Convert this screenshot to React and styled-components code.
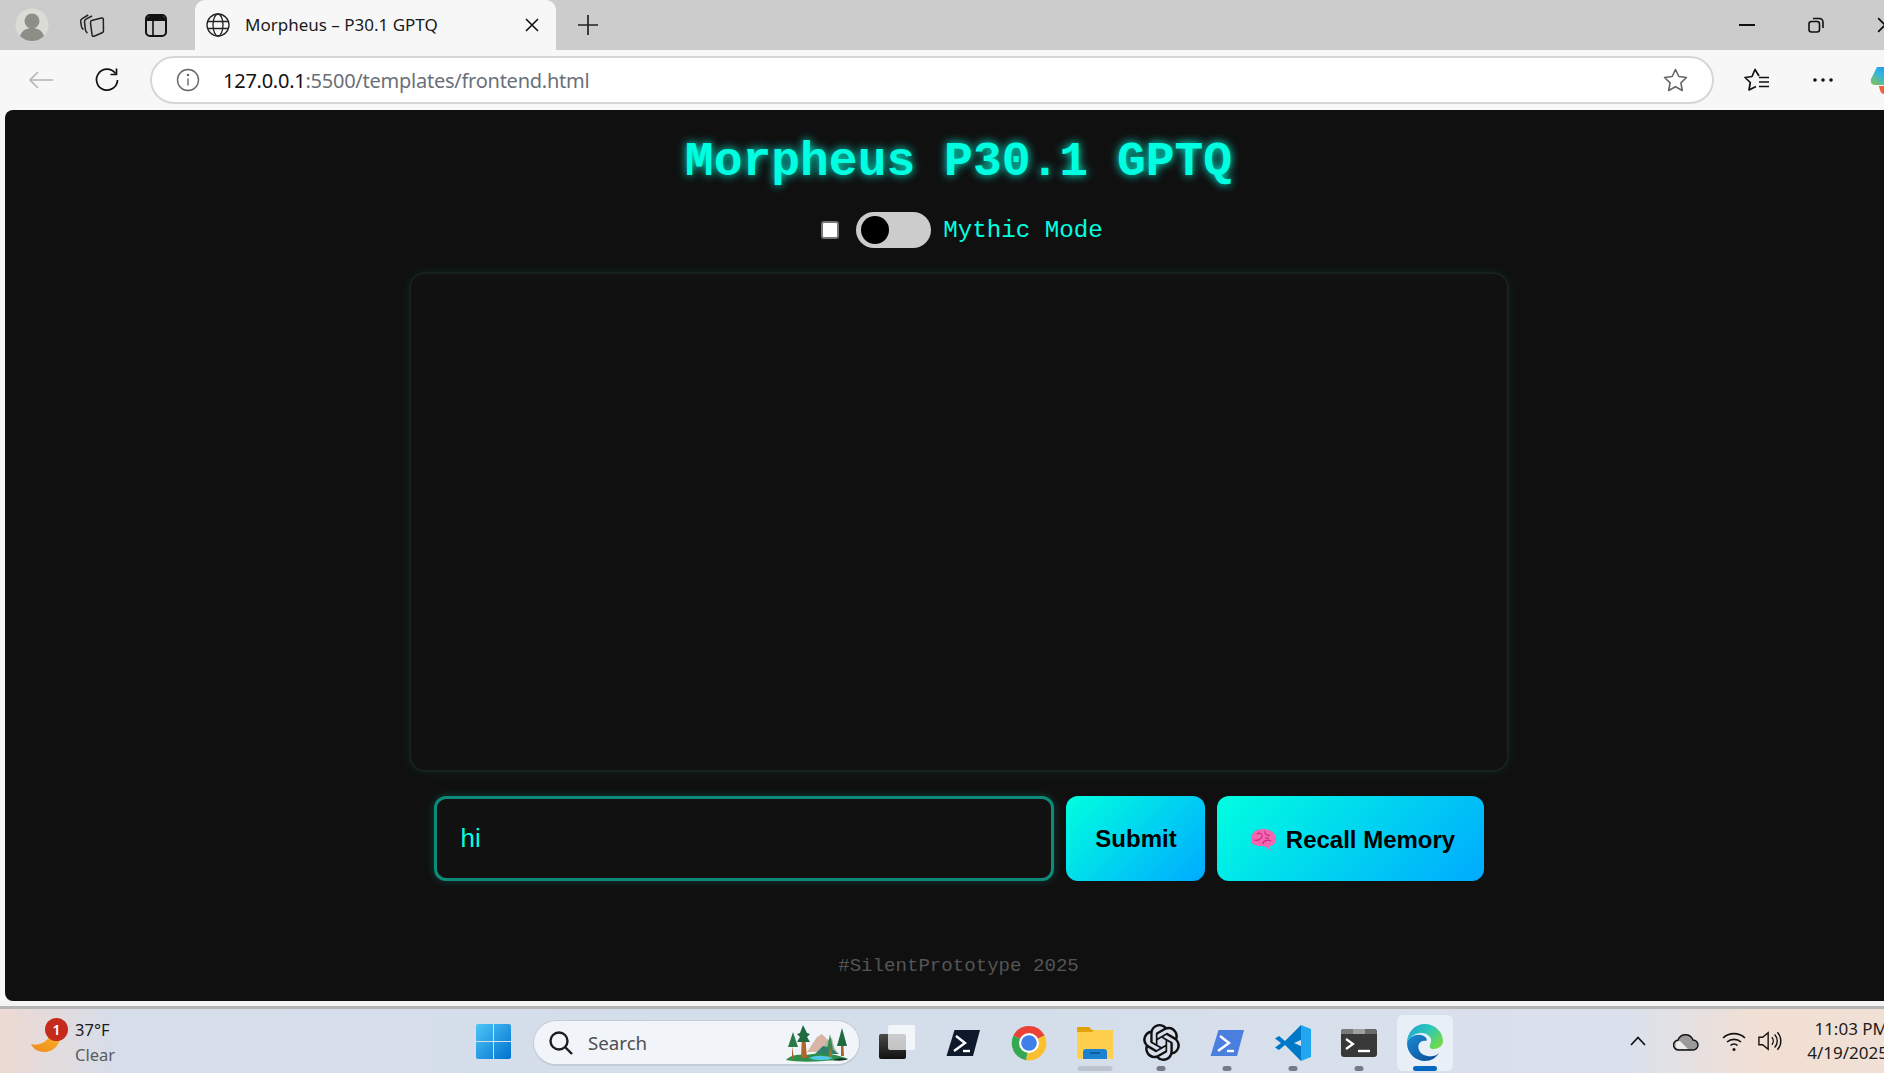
import styled, { createGlobalStyle } from "styled-components";
import { SiOpenai } from "react-icons/si";

const GlobalStyle = createGlobalStyle`
  html, body {
    margin: 0;
    padding: 0;
    width: 1884px;
    height: 1073px;
    overflow: hidden;
    background: #f7f7f7;
  }
`;

const Window = styled.div`
  width: 1917px;
  height: 1073px;
  display: flex;
  flex-direction: column;
  font-family: "Noto Sans", "Open Sans", sans-serif;
`;

/* browser chrome */
const TabBar = styled.div`
  height: 50px;
  background: #cccccc;
  display: flex;
  align-items: center;
  flex-shrink: 0;
`;

const TabIcon = styled.div`
  width: ${(props) => props.width}px;
  display: flex;
  justify-content: center;
  align-items: center;
`;

const Tab = styled.div`
  width: 361px;
  height: 50px;
  margin-left: 4px;
  background: #f7f7f7;
  border-radius: 10px 10px 0 0;
  display: flex;
  align-items: center;
  padding: 0 17px 0 11px;
  box-sizing: border-box;
`;

const TabTitle = styled.span`
  flex: 1;
  margin-left: 15px;
  margin-top: -2px;
  font-size: 17px;
  color: #1a1a1a;
  white-space: nowrap;
`;

const WindowControls = styled.div`
  margin-left: auto;
  display: flex;
  align-items: center;
  gap: 53px;
  padding-right: 24px;
`;

const Toolbar = styled.div`
  height: 60px;
  background: #f7f7f7;
  display: flex;
  align-items: center;
  flex-shrink: 0;
`;

const ToolButton = styled.div`
  width: ${(props) => props.width}px;
  flex-shrink: 0;
  display: flex;
  justify-content: center;
  align-items: center;
`;

const Omnibox = styled.div`
  width: 1564px;
  height: 48px;
  margin-top: -1px;
  flex-shrink: 0;
  box-sizing: border-box;
  background: #ffffff;
  border: 2px solid #d6d6d6;
  border-radius: 24px;
  display: flex;
  align-items: center;
  padding: 0 24px 0 24px;
`;

const Url = styled.div`
  flex: 1;
  margin-left: 23px;
  padding-top: 2px;
  font-size: 20px;
  letter-spacing: -0.25px;
  color: #6b7078;
  white-space: nowrap;
`;

const UrlHost = styled.span`
  color: #111111;
`;

/* page */
const Page = styled.main`
  width: 1907px;
  margin-left: 5px;
  height: 891px;
  flex-shrink: 0;
  background: #101010;
  border-radius: 8px 8px 0 8px;
  display: flex;
  flex-direction: column;
  align-items: center;
  font-family: "Liberation Mono", "Courier New", monospace;
`;

const Title = styled.h1`
  margin: 22px 0 0;
  height: 60px;
  line-height: 60px;
  font-size: 48px;
  font-weight: 700;
  color: #00ffe0;
  text-shadow: 0 0 10px #00ffe0;
`;

const ModeRow = styled.div`
  margin-top: 20px;
  height: 36px;
  padding-left: 7px;
  display: flex;
  align-items: center;
`;

const Checkbox = styled.input.attrs({ type: "checkbox" })`
  appearance: none;
  width: 18px;
  height: 18px;
  margin: 0 17px 0 0;
  box-sizing: border-box;
  background: #ffffff;
  border: 2px solid #767676;
  border-radius: 3px;
`;

const Switch = styled.div`
  width: 75px;
  height: 36px;
  padding-left: 5px;
  box-sizing: border-box;
  border-radius: 18px;
  background: #cccccc;
  display: flex;
  align-items: center;
`;

const Knob = styled.div`
  width: 28px;
  height: 28px;
  border-radius: 50%;
  background: #000000;
`;

const ModeLabel = styled.span`
  margin-left: 12px;
  font-size: 24.2px;
  color: #00ffe0;
`;

const ChatBox = styled.div`
  margin-top: 24px;
  width: 1100px;
  height: 500px;
  box-sizing: border-box;
  background: #111111;
  border: 2px solid #162220;
  border-radius: 16px;
  box-shadow: 0 0 12px rgba(0, 255, 224, 0.08);
`;

const InputRow = styled.form`
  margin-top: 24px;
  display: flex;
  gap: 12px;
`;

const TextInput = styled.input`
  width: 620px;
  height: 85px;
  box-sizing: border-box;
  padding: 0 24px;
  background: #111111;
  border: 3px solid #0e8a78;
  border-radius: 12px;
  box-shadow: 0 0 8px rgba(0, 255, 224, 0.2);
  outline: none;
  font-family: "Liberation Sans", Arial, sans-serif;
  font-size: 26px;
  color: #00ffe0;
`;

const Button = styled.button`
  width: ${(props) => props.width}px;
  height: 85px;
  border: none;
  border-radius: 12px;
  background: linear-gradient(135deg, #00ffe0 0%, #00aaff 100%);
  font-family: "Liberation Sans", Arial, sans-serif;
  font-size: 24px;
  font-weight: 700;
  color: #000000;
  display: flex;
  align-items: center;
  justify-content: center;
  gap: 9px;
  padding: ${(props) => (props.withIcon ? "3px 0 0 5px" : "0 0 0 2px")};
`;

const Footer = styled.footer`
  margin-top: 74px;
  font-size: 19.1px;
  line-height: 22px;
  color: #555555;
`;

/* taskbar */
const BottomStrip = styled.div`
  height: 5px;
  background: #f4f4f4;
  border-bottom: 3px solid #b4b4b4;
  flex-shrink: 0;
`;

const Taskbar = styled.div`
  height: 64px;
  display: flex;
  align-items: center;
  background: linear-gradient(90deg, #edd9d2 0%, #d6deea 6%, #d3deea 50%, #dbe1ec 85%, #f2dfd3 92%, #f0e0d6 100%);
  font-family: "Noto Sans", "Open Sans", sans-serif;
  color: #1c1c1c;
`;

const Weather = styled.div`
  position: relative;
  width: 476px;
  height: 64px;
  flex-shrink: 0;
  display: flex;
  align-items: center;
  padding-left: 30px;
  box-sizing: border-box;
`;

const Badge = styled.span`
  position: absolute;
  left: 45px;
  top: 9px;
  width: 23px;
  height: 23px;
  border-radius: 50%;
  background: #c42b1c;
  color: #ffffff;
  font-size: 14px;
  font-weight: 600;
  line-height: 23px;
  text-align: center;
`;

const WeatherText = styled.div`
  margin-left: 13px;
  padding-top: 2px;
  display: flex;
  flex-direction: column;
  gap: 2px;
  font-size: 16.5px;
  line-height: 23px;
`;

const WeatherSub = styled.span`
  color: #5c5c5c;
`;

const SearchPill = styled.div`
  width: 327px;
  height: 46px;
  margin: 4px 4px 0 22px;
  box-sizing: border-box;
  background: #f1f5fa;
  border: 1px solid #c3cbd6;
  border-bottom-width: 2px;
  border-radius: 23px;
  display: flex;
  align-items: center;
  padding: 0 10px 0 14px;
  flex-shrink: 0;
`;

const SearchText = styled.span`
  flex: 1;
  margin-left: 14px;
  font-size: 18.7px;
  color: #4f4f4f;
`;

const TaskIcon = styled.div`
  position: relative;
  width: 56px;
  height: 56px;
  margin: 3px 5px 0;
  flex-shrink: 0;
  display: flex;
  align-items: center;
  justify-content: center;
  border-radius: 6px;
  background: ${(props) => (props.active ? "#e9eff7" : "transparent")};
`;

const Indicator = styled.span`
  position: absolute;
  bottom: 0;
  left: 50%;
  transform: translateX(-50%);
  height: 5px;
  width: ${(props) => (props.active ? 24 : props.wide ? 35 : 9)}px;
  border-radius: 3px;
  background: ${(props) =>
    props.active ? "#0067c0" : props.wide ? "#bcc3cd" : "#757b84"};
`;

const Tray = styled.div`
  margin-left: 156px;
  display: flex;
  align-items: center;
  flex-shrink: 0;
`;

const TrayIcon = styled.div`
  width: ${(props) => props.width}px;
  display: flex;
  justify-content: center;
`;

const Clock = styled.div`
  margin-left: 16px;
  display: flex;
  flex-direction: column;
  align-items: flex-end;
  width: 90px;
  font-size: 17px;
  line-height: 24px;
  white-space: nowrap;
`;

/* icons */
const Avatar = () => (
  <svg width="34" height="34" viewBox="0 0 34 34">
    <circle cx="17" cy="17" r="16.5" fill="#dcdcd6" />
    <circle cx="17" cy="13" r="7.5" fill="#8f8d88" />
    <path d="M5 28c2-6 7-8 12-8s10 2 12 8c-3 3-7 5-12 5s-9-2-12-5z" fill="#8f8d88" />
  </svg>
);

const CollectionsIcon = () => (
  <svg width="26" height="26" viewBox="0 0 26 26" fill="none" stroke="#222" strokeWidth="1.5">
    <path d="M12.500 8.500l10-2.500c1-.2 1.800.3 1.800 1.300l.2 11.500c0 1-.5 1.600-1.400 1.900l-8 3.500c-1 .4-1.900 0-2-1l-1.600-12c-.1-1.200.1-2.400 1-2.700z" />
    <path d="M8.500 21c-1.200-.6-1.800-1.500-2-2.800l-1-8c-.2-1.500.4-2.500 1.500-3l6-3.200" />
    <path d="M4.500 17.500c-1-.6-1.700-1.400-2-2.800l-.8-5c-.2-1.500.4-2.500 1.500-3l6-3.700" />
  </svg>
);

const TabsIcon = () => (
  <svg width="22" height="23" viewBox="0 0 22 23">
    <rect x="1" y="1" width="20" height="21" rx="4" fill="none" stroke="#111" strokeWidth="2" />
    <path d="M2 5a3 3 0 0 1 3-3h12a3 3 0 0 1 3 3v2H2z" fill="#111" />
    <path d="M8 7v14" stroke="#111" strokeWidth="1.6" />
  </svg>
);

const GlobeIcon = () => (
  <svg width="24" height="24" viewBox="0 0 24 24" fill="none" stroke="#222" strokeWidth="1.3">
    <circle cx="12" cy="12" r="11" />
    <ellipse cx="12" cy="12" rx="5" ry="11" />
    <path d="M1.500 8.500h21M1.500 15.500h21" />
  </svg>
);

const CloseIcon = ({ size = 14, width = 1.6 }) => (
  <svg width={size} height={size} viewBox="0 0 14 14" stroke="#111" strokeWidth={width}>
    <path d="M1 1l12 12M13 1L1 13" />
  </svg>
);

const PlusIcon = () => (
  <svg width="22" height="22" viewBox="0 0 22 22" stroke="#222" strokeWidth="1.7">
    <path d="M11 1v20M1 11h20" />
  </svg>
);

const MinimizeIcon = () => (
  <svg width="16" height="2" viewBox="0 0 16 2">
    <rect width="16" height="2" fill="#111" />
  </svg>
);

const RestoreIcon = () => (
  <svg width="16" height="16" viewBox="0 0 16 16" fill="none" stroke="#111" strokeWidth="1.6">
    <rect x="1" y="4.500" width="10.500" height="10.500" rx="2.500" />
    <path d="M5 1.500h6.500a3.500 3.500 0 0 1 3.500 3.500v6" />
  </svg>
);

const BackIcon = () => (
  <svg width="26" height="20" viewBox="0 0 26 20" fill="none" stroke="#b4b4b4" strokeWidth="1.6">
    <path d="M25 10H2M10 2l-8 8 8 8" />
  </svg>
);

const ReloadIcon = () => (
  <svg width="26" height="26" viewBox="0 0 26 26" fill="none" stroke="#111" strokeWidth="1.7">
    <path d="M21.500 6.500A10.500 10.500 0 1 0 23.500 13" />
    <path d="M22.500 1.500v6h-6" />
  </svg>
);

const InfoIcon = () => (
  <svg width="24" height="24" viewBox="0 0 24 24" fill="none" stroke="#666" strokeWidth="1.4">
    <circle cx="12" cy="12" r="10.500" />
    <path d="M12 10.500v7" />
    <circle cx="12" cy="7" r="0.6" fill="#666" />
  </svg>
);

const StarIcon = ({ color = "#666" }) => (
  <svg width="25" height="24" viewBox="0 0 25 24" fill="none" stroke={color} strokeWidth="1.6" strokeLinejoin="round">
    <path d="M12.500 1.500l3.300 7 7.700 1-5.600 5.300 1.400 7.700-6.800-3.800-6.800 3.800 1.400-7.700L1.500 9.500l7.700-1z" />
  </svg>
);

const FavoritesIcon = () => (
  <svg width="26" height="24" viewBox="0 0 26 24" fill="none" stroke="#111" strokeWidth="1.7" strokeLinejoin="round">
    <path d="M15 8l-4-6.500L8 8.500l-7 1 5.300 5L5 22l7-3.500" />
    <path d="M15 9.500h10M15 14h10M15 18.500h10" />
  </svg>
);

const DotsIcon = () => (
  <svg width="22" height="4" viewBox="0 0 22 4" fill="#111">
    <circle cx="3" cy="2" r="1.800" />
    <circle cx="11" cy="2" r="1.800" />
    <circle cx="19" cy="2" r="1.800" />
  </svg>
);

const CopilotIcon = () => (
  <svg width="30" height="30" viewBox="0 0 30 30">
    <defs>
      <linearGradient id="cpa" x1="0" y1="1" x2="1" y2="0">
        <stop offset="0" stopColor="#8bc34a" />
        <stop offset="0.5" stopColor="#2fb3e8" />
        <stop offset="1" stopColor="#2f7be8" />
      </linearGradient>
    </defs>
    <path d="M8 2h16c3 0 4 2 3 5l-5 13H6c-3 0-5-2-4-6z" fill="url(#cpa)" />
    <path d="M10 21h10c0 5-2 8-5 8-3 0-4-3-5-8z" fill="#f0603c" />
  </svg>
);

const BrainIcon = () => (
  <svg width="27" height="24" viewBox="0 0 27 24">
    <path d="M1 11C1 5 6 1 13 1c7 0 13 4 13 10 0 4-3 7-7 7l2 5-5-4c-2-1-4-1-6-1-5 0-9-2-9-7z" fill="#f566b0" />
    <path d="M7 6c3-2 6 0 5 3M15 3c-1 3 2 5 5 4M4 12c3 1 6 0 8-3M13 16c0-3 4-5 8-3M15 10l4 0" fill="none" stroke="#c9267f" strokeWidth="1.100" />
  </svg>
);

const SunIcon = () => (
  <svg width="32" height="24" viewBox="0 0 32 24">
    <defs>
      <linearGradient id="sun" x1="0" y1="1" x2="1" y2="0">
        <stop offset="0" stopColor="#ee8a1a" />
        <stop offset="1" stopColor="#fbb32c" />
      </linearGradient>
    </defs>
    <path d="M1 15c5 2 14 0 19-8 2-3 7-3 10-4 2 11-6 20-15 20C8 23 3 20 1 15z" fill="url(#sun)" />
  </svg>
);

const WindowsLogo = () => (
  <svg width="35" height="35" viewBox="0 0 35 35">
    <defs>
      <linearGradient id="win" x1="0" y1="0" x2="1" y2="1">
        <stop offset="0" stopColor="#4fc6f8" />
        <stop offset="1" stopColor="#0072cf" />
      </linearGradient>
    </defs>
    <path d="M0 2a2 2 0 0 1 2-2h15v17H0zM18 0h15a2 2 0 0 1 2 2v15H18zM0 18h17v17H2a2 2 0 0 1-2-2zM18 18h17v15a2 2 0 0 1-2 2H18z" fill="url(#win)" />
  </svg>
);

const SearchIcon = () => (
  <svg width="26" height="26" viewBox="0 0 26 26" fill="none" stroke="#1c1c1c" strokeWidth="2.400">
    <circle cx="11" cy="11" r="8.500" />
    <path d="M17 17l7 7" />
  </svg>
);

const TreesIcon = () => (
  <svg width="64" height="38" viewBox="0 0 64 38">
    <path d="M22 28l10-15 5-3 5 5 4 2 6 11z" fill="#d8b5a6" />
    <path d="M36 28l6-11 5-3 3 14z" fill="#a9b6a8" />
    <path d="M30 30l8-8 8 2 8 6z" fill="#2f7f6b" />
    <path d="M1 36c4-5 12-6 20-5 10-2 26-3 42 4-10 2-18 1-24 2-14 1-28 1-38-1z" fill="#2f8f4a" />
    <path d="M24 34c6-3 16-3 24 0-7 3-17 3-24 0z" fill="#55c8e6" />
    <path d="M48 36c4-2 10-2 15-1-4 2-10 2-15 1z" fill="#12392b" />
    <path d="M7 22l2 13H7z" fill="#a5622d" />
    <path d="M17 10h3l2 24h-6z" fill="#b0652a" />
    <path d="M44 16h2l1 17h-3z" fill="#a5702d" />
    <path d="M56 14h2l1 18h-3z" fill="#a5622d" />
    <path d="M8 8l5 15H3z" fill="#2a7a45" />
    <path d="M18 1l4 8 3 1-3 3 3 5H12l3-5-3-3 3-1z" fill="#1f6b3f" />
    <path d="M57 4l5 18H52z" fill="#1f6b3f" />
    <path d="M45 10l3 15h-6z" fill="#3a8a4f" />
  </svg>
);

const StackIcon = () => (
  <svg width="37" height="36" viewBox="0 0 37 36">
    <defs>
      <linearGradient id="stackDark" x1="0" y1="0" x2="0" y2="1">
        <stop offset="0" stopColor="#4a4a4a" />
        <stop offset="1" stopColor="#111111" />
      </linearGradient>
    </defs>
    <rect x="0" y="9" width="27" height="25" rx="2" fill="url(#stackDark)" />
    <rect x="9" y="0" width="27" height="25" rx="2" fill="#ffffff" fillOpacity="0.72" />
  </svg>
);

const PromptPath = () => (
  <g fill="none" stroke="#ffffff" strokeWidth="2.400">
    <path d="M11 11l9 7-11 8" />
    <path d="M18 26h7" />
  </g>
);

const PowershellDark = () => (
  <svg width="36" height="36" viewBox="0 0 36 36">
    <path d="M9.500 5h25.500l-7 26H1.500z" fill="#0e1a2b" />
    <PromptPath />
  </svg>
);

const PowershellBlue = () => (
  <svg width="36" height="36" viewBox="0 0 36 36">
    <path d="M9.500 5h25.500l-7 26H1.500z" fill="#4a7fe0" />
    <PromptPath />
  </svg>
);

const ChromeIcon = () => (
  <svg width="36" height="36" viewBox="0 0 36 36">
    <path d="M18 18L2.400 10.500A17.500 17.500 0 0 1 33.600 10.500z" fill="#ea4335" />
    <path d="M18 18L33.600 10.500A17.500 17.500 0 0 1 15 35.300z" fill="#fbc02d" />
    <path d="M18 18L15 35.300A17.500 17.500 0 0 1 2.400 10.500z" fill="#34a853" />
    <circle cx="18" cy="18" r="10" fill="#ffffff" />
    <circle cx="18" cy="18" r="7.800" fill="#3f7fe8" />
  </svg>
);

const FolderIcon = () => (
  <svg width="36" height="36" viewBox="0 0 36 36">
    <path d="M0 3a1 1 0 0 1 1-1h11l3 3h21v4H0z" fill="#dfa305" />
    <path d="M0 7h15l2-2h18a1 1 0 0 1 1 1v28H0z" fill="#ffcf4d" />
    <path d="M6 27a3 3 0 0 1 3-3h18a3 3 0 0 1 3 3v7H6z" fill="#1b82d1" />
    <path d="M13 28h10" stroke="#0a4f8c" strokeWidth="1.500" />
  </svg>
);

const VsCodeIcon = () => (
  <svg width="36" height="36" viewBox="0 0 36 36">
    <path d="M26 0L10 16 4 11 0 13.500 6 18l-6 4.500L4 25l6-5 16 16 2-14-9-4 9-4z" fill="#0078c8" />
    <path d="M26 0l10 4v28l-10 4z" fill="#22a6f0" />
  </svg>
);

const TerminalIcon = () => (
  <svg width="36" height="28" viewBox="0 0 36 28">
    <rect width="36" height="28" rx="3" fill="#383838" />
    <path d="M0 5V3a3 3 0 0 1 3-3h9v5z" fill="#7a7a7a" />
    <path d="M12 0h12v5H12z" fill="#a0a0a0" />
    <path d="M24 0h9a3 3 0 0 1 3 3v2H24z" fill="#6a6a6a" />
    <path d="M5 10l7 5-7 5" fill="none" stroke="#fff" strokeWidth="2.200" />
    <path d="M17 22h12" stroke="#fff" strokeWidth="2.400" />
  </svg>
);

const EdgeIcon = () => (
  <svg width="36" height="37" viewBox="0 0 36 37">
    <defs>
      <linearGradient id="edgeA" x1="0" y1="0" x2="1" y2="0.600">
        <stop offset="0" stopColor="#1f9fd8" />
        <stop offset="0.55" stopColor="#2cc8b8" />
        <stop offset="1" stopColor="#6fd84f" />
      </linearGradient>
      <linearGradient id="edgeB" x1="0" y1="0" x2="1" y2="1">
        <stop offset="0" stopColor="#1a8ad6" />
        <stop offset="1" stopColor="#0b4a90" />
      </linearGradient>
    </defs>
    <path d="M18 0C28 0 36 8 36 17 36 22 31 25 27 25 23 25 22 23 23 21 24 18 25 16 23 13 20 9 14 8 9 10 4 12 1 16 0 19 0 8 8 0 18 0z" fill="url(#edgeA)" />
    <path d="M0 19C2 13 8 10 14 11 19 12 21 16 19 17 13 16 10 21 12 26 14 31 20 33 26 32 28 32 30 31 32 29 29 34 24 37 18 37 8 37 0 29 0 19z" fill="url(#edgeB)" />
  </svg>
);

const ChevronIcon = () => (
  <svg width="16" height="10" viewBox="0 0 16 10" fill="none" stroke="#111" strokeWidth="1.700">
    <path d="M1 9l7-7.500L15 9" />
  </svg>
);

const CloudIcon = () => (
  <svg width="26" height="20" viewBox="0 0 26 20">
    <path d="M6 19a5 5 0 0 1-1-10 8 8 0 0 1 15 0 5 5 0 0 1 0 10z" fill="#9a9a9a" stroke="#111" strokeWidth="1.400" />
    <path d="M6 18a4 4 0 0 1 1-8l8 8z" fill="#ececec" />
  </svg>
);

const WifiIcon = () => (
  <svg width="24" height="22" viewBox="0 0 24 22" fill="none" stroke="#111" strokeWidth="1.600">
    <path d="M1 8a16 16 0 0 1 22 0M5 12a10.500 10.500 0 0 1 14 0M8.500 15.500a5 5 0 0 1 7 0" />
    <circle cx="12" cy="19.500" r="1.500" fill="#111" stroke="none" />
  </svg>
);

const SpeakerIcon = () => (
  <svg width="26" height="24" viewBox="0 0 26 24" fill="none" stroke="#111" strokeWidth="1.500">
    <path d="M1 8v8h4l6 5V3L5 8z" />
    <path d="M15 8a6 6 0 0 1 0 8M18 5a10 10 0 0 1 0 14M21 2.500a14 14 0 0 1 0 19" />
  </svg>
);

const taskIcons = [
  { key: "stack", icon: <StackIcon /> },
  { key: "ps", icon: <PowershellDark /> },
  { key: "chrome", icon: <ChromeIcon /> },
  { key: "folder", icon: <FolderIcon />, mark: "wide" },
  { key: "gpt", icon: <SiOpenai size={37} color="#111111" />, mark: "dot" },
  { key: "psblue", icon: <PowershellBlue />, mark: "dot" },
  { key: "vscode", icon: <VsCodeIcon />, mark: "dot" },
  { key: "terminal", icon: <TerminalIcon />, mark: "dot" },
  { key: "edge", icon: <EdgeIcon />, mark: "active" },
];

const App = () => {
  return (
    <Window>
      <GlobalStyle />
      <TabBar>
        <TabIcon width={64}><Avatar /></TabIcon>
        <TabIcon width={56}><CollectionsIcon /></TabIcon>
        <TabIcon width={71}><TabsIcon /></TabIcon>
        <Tab>
          <GlobeIcon />
          <TabTitle>Morpheus – P30.1 GPTQ</TabTitle>
          <CloseIcon />
        </Tab>
        <TabIcon width={64}><PlusIcon /></TabIcon>
        <WindowControls>
          <MinimizeIcon />
          <RestoreIcon />
          <CloseIcon size={16} />
        </WindowControls>
      </TabBar>

      <Toolbar>
        <ToolButton width={82}><BackIcon /></ToolButton>
        <ToolButton width={50}><ReloadIcon /></ToolButton>
        <ToolButton width={18} />
        <Omnibox>
          <InfoIcon />
          <Url><UrlHost>127.0.0.1</UrlHost>:5500/templates/frontend.html</Url>
          <StarIcon />
        </Omnibox>
        <ToolButton width={86}><FavoritesIcon /></ToolButton>
        <ToolButton width={46}><DotsIcon /></ToolButton>
        <ToolButton width={76}><CopilotIcon /></ToolButton>
      </Toolbar>

      <Page>
        <Title>Morpheus P30.1 GPTQ</Title>
        <ModeRow>
          <Checkbox />
          <Switch><Knob /></Switch>
          <ModeLabel>Mythic Mode</ModeLabel>
        </ModeRow>
        <ChatBox />
        <InputRow onSubmit={(e) => e.preventDefault()}>
          <TextInput defaultValue="hi" />
          <Button width={139}>Submit</Button>
          <Button width={267} withIcon><BrainIcon />Recall Memory</Button>
        </InputRow>
        <Footer>#SilentPrototype 2025</Footer>
      </Page>

      <BottomStrip />
      <Taskbar>
        <Weather>
          <SunIcon />
          <Badge>1</Badge>
          <WeatherText>
            <span>37°F</span>
            <WeatherSub>Clear</WeatherSub>
          </WeatherText>
        </Weather>
        <WindowsLogo />
        <SearchPill>
          <SearchIcon />
          <SearchText>Search</SearchText>
          <TreesIcon />
        </SearchPill>
        {taskIcons.map((item) => (
          <TaskIcon key={item.key} active={item.mark === "active"}>
            {item.icon}
            {item.mark && (
              <Indicator active={item.mark === "active"} wide={item.mark === "wide"} />
            )}
          </TaskIcon>
        ))}
        <Tray>
          <TrayIcon width={48}><ChevronIcon /></TrayIcon>
          <TrayIcon width={48}><CloudIcon /></TrayIcon>
          <TrayIcon width={48}><WifiIcon /></TrayIcon>
          <TrayIcon width={24}><SpeakerIcon /></TrayIcon>
          <Clock>
            <span>11:03 PM</span>
            <span>4/19/2025</span>
          </Clock>
        </Tray>
      </Taskbar>
    </Window>
  );
};

export default App;
